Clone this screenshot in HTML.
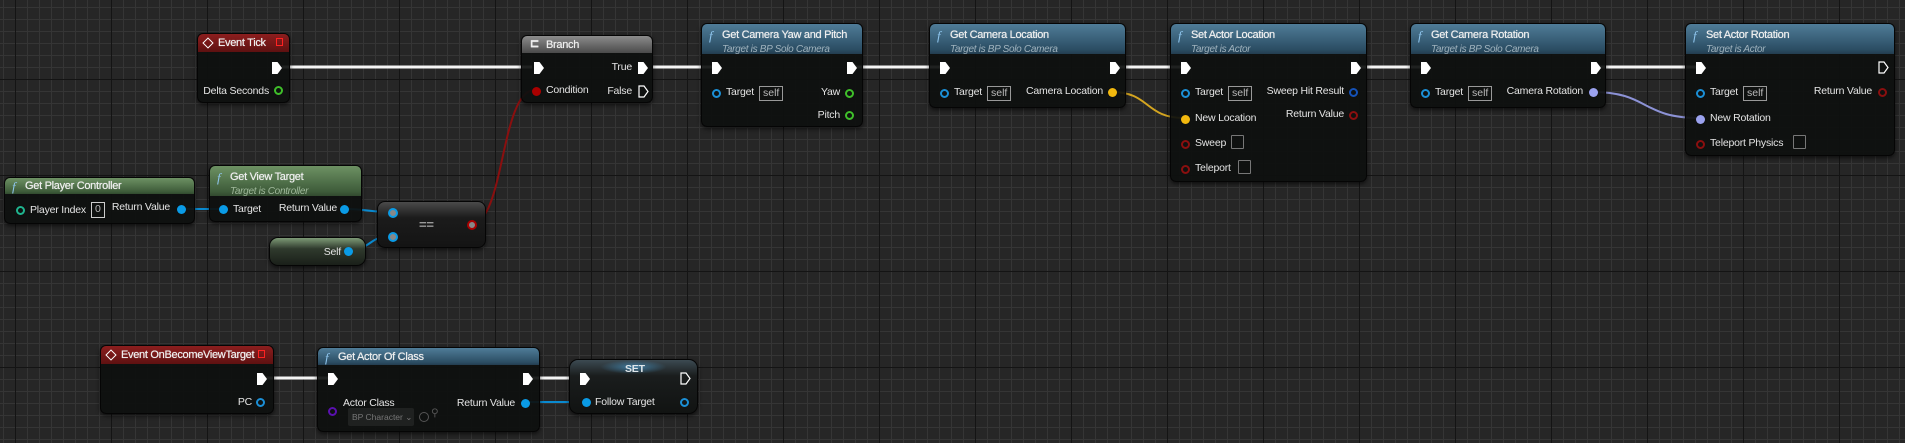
<!DOCTYPE html>
<html><head><meta charset="utf-8"><style>
*{margin:0;padding:0;box-sizing:border-box}
body{width:1905px;height:443px;overflow:hidden;position:relative;font-family:"Liberation Sans",sans-serif;font-size:10.5px;color:#e6e6e6;
background-color:#262626;
background-image:
linear-gradient(to right,#141414 1px,transparent 1px),
linear-gradient(to bottom,#141414 1px,transparent 1px),
linear-gradient(to right,#353535 1px,transparent 1px),
linear-gradient(to bottom,#353535 1px,transparent 1px);
background-size:96px 96px,96px 96px,12px 12px,12px 12px;
background-position:15px 79px,15px 79px,3px 7px,3px 7px;}
.n{position:absolute;background:rgba(14,16,15,0.93);border:1px solid #050505;border-radius:6px;box-shadow:0 2px 4px rgba(0,0,0,.6)}
.h{position:absolute;left:0;right:0;top:0;border-radius:5px 5px 0 0;padding:5px 0 0 20px;font-size:11px;letter-spacing:-0.3px;color:#eee;white-space:nowrap;text-shadow:0 0 0.6px #fff}
.h i{position:absolute;left:7px;top:4px;font-family:"Liberation Serif",serif;font-style:italic;font-weight:normal;color:#8fc6ee;font-size:13px;text-shadow:none}
.h s{display:block;text-decoration:none;font-style:italic;font-weight:normal;font-size:10px;color:#9fb2bd;margin-top:3px;text-shadow:none}
.blue{background:linear-gradient(#4f7c98,#2b4d63 85%,#233d4f)}
.green{background:linear-gradient(#6d9163,#3e5c3a 85%,#324a2f)}
.green s{color:#9fb89a}
.red{background:linear-gradient(#8c1e1e,#5e1111)}
.grey{background:linear-gradient(#8c8c8c,#4a4a4a)}
.t{position:absolute;white-space:nowrap;font-size:10.5px;letter-spacing:-0.2px;color:#e4e4e4}
.ex{position:absolute;width:10px;height:12px;background:#fff;clip-path:polygon(0 0,55% 0,100% 50%,55% 100%,0 100%)}
.exo{position:absolute;width:11px;height:13px}
.p{position:absolute;width:9px;height:9px;border-radius:50%}
.po{position:absolute;width:9px;height:9px;border-radius:50%;border:2px solid}
.box{position:absolute;border:1px solid #999;color:#bbb;font-size:10.5px;padding:0 3px;height:15px;line-height:13px}
.cb{position:absolute;width:13px;height:14px;border:1px solid #777;border-radius:1px}
</style></head><body>
<svg width="1905" height="443" style="position:absolute;left:0;top:0">
<g stroke="#f4f4f4" stroke-width="3" fill="none">
<line x1="282" y1="67" x2="532" y2="67"/>
<line x1="652" y1="67" x2="712" y2="67"/>
<line x1="850" y1="67" x2="940" y2="67"/>
<line x1="1114" y1="67" x2="1182" y2="67"/>
<line x1="1354" y1="67" x2="1422" y2="67"/>
<line x1="1594" y1="67" x2="1698" y2="67"/>
<line x1="262" y1="378" x2="330" y2="378"/>
<line x1="526" y1="378" x2="582" y2="378"/>
</g>
<g fill="none" stroke-width="2">
<path d="M471 224 C505 224,500 90,535 90" stroke="#8a0f0f"/>
<path d="M178 209 L222 209" stroke="#0a8ad0"/>
<path d="M343 209 C370 209,365 212,392 212" stroke="#0a8ad0"/>
<path d="M348 250 C372 250,368 236,392 236" stroke="#0a8ad0"/>
<path d="M1112 92 C1150 92,1145 118,1184 118" stroke="#d4a520"/>
<path d="M1592 92 C1650 92,1640 118,1700 118" stroke="#8c92d6"/>
<path d="M524 402 L586 402" stroke="#0a8ad0"/>
</g>
</svg>

<!-- Event Tick -->
<div class="n" style="left:197px;top:33px;width:93px;height:70px">
<div class="h red" style="height:18px;padding:3px 0 0 20px">Event Tick<span style="position:absolute;left:6px;top:5px;width:8px;height:8px;border:1.5px solid #fff;transform:rotate(45deg)"></span><span style="position:absolute;right:6px;top:4px;width:7px;height:8px;border:1.5px solid #f22"></span></div>
<div class="ex" style="left:74px;top:28px"></div>
<div class="t" style="right:20px;top:51px">Delta Seconds</div>
<div class="po" style="left:76px;top:52px;border-color:#3fbf2a"></div>
</div>

<!-- Branch -->
<div class="n" style="left:521px;top:35px;width:132px;height:68px">
<div class="h grey" style="height:17px;padding:3px 0 0 24px">Branch<span style="position:absolute;left:8px;top:1px;font-weight:bold">⊏</span></div>
<div class="ex" style="left:12px;top:26px"></div>
<div class="t" style="right:20px;top:25px">True</div>
<div class="ex" style="left:116px;top:26px"></div>
<div class="p" style="left:10px;top:51px;background:#a00"></div>
<div class="t" style="left:24px;top:48px">Condition</div>
<div class="t" style="right:20px;top:49px">False</div>
<svg class="exo" style="left:116px;top:49px"><polygon points="1,1 6,1 10,6.5 6,12 1,12" fill="none" stroke="#fff" stroke-width="1.2"/></svg>
</div>

<!-- Get Camera Yaw and Pitch -->
<div class="n" style="left:701px;top:23px;width:162px;height:104px">
<div class="h blue" style="height:30px"><i>f</i>Get Camera Yaw and Pitch<s>Target is BP Solo Camera</s></div>
<div class="ex" style="left:10px;top:38px"></div>
<div class="ex" style="left:145px;top:38px"></div>
<div class="po" style="left:10px;top:65px;border-color:#1b8fd6"></div>
<div class="t" style="left:24px;top:62px">Target</div>
<div class="box" style="left:57px;top:62px">self</div>
<div class="t" style="right:22px;top:62px">Yaw</div>
<div class="po" style="left:143px;top:65px;border-color:#3fbf2a"></div>
<div class="t" style="right:22px;top:85px">Pitch</div>
<div class="po" style="left:143px;top:87px;border-color:#3fbf2a"></div>
</div>

<!-- Get Camera Location -->
<div class="n" style="left:929px;top:23px;width:197px;height:85px">
<div class="h blue" style="height:30px"><i>f</i>Get Camera Location<s>Target is BP Solo Camera</s></div>
<div class="ex" style="left:10px;top:38px"></div>
<div class="ex" style="left:180px;top:38px"></div>
<div class="po" style="left:10px;top:65px;border-color:#1b8fd6"></div>
<div class="t" style="left:24px;top:62px">Target</div>
<div class="box" style="left:57px;top:62px">self</div>
<div class="t" style="right:22px;top:61px">Camera Location</div>
<div class="p" style="left:178px;top:64px;background:#f2b80e"></div>
</div>

<!-- Set Actor Location -->
<div class="n" style="left:1170px;top:23px;width:197px;height:159px">
<div class="h blue" style="height:30px"><i>f</i>Set Actor Location<s>Target is Actor</s></div>
<div class="ex" style="left:10px;top:38px"></div>
<div class="ex" style="left:180px;top:38px"></div>
<div class="po" style="left:10px;top:65px;border-color:#1b8fd6"></div>
<div class="t" style="left:24px;top:62px">Target</div>
<div class="box" style="left:57px;top:62px">self</div>
<div class="t" style="right:22px;top:61px">Sweep Hit Result</div>
<div class="po" style="left:178px;top:64px;border-color:#1552b8"></div>
<div class="p" style="left:10px;top:91px;background:#f2b80e"></div>
<div class="t" style="left:24px;top:88px">New Location</div>
<div class="t" style="right:22px;top:84px">Return Value</div>
<div class="po" style="left:178px;top:87px;border-color:#8a0f0f"></div>
<div class="po" style="left:10px;top:116px;border-color:#8a0f0f"></div>
<div class="t" style="left:24px;top:113px">Sweep</div>
<div class="cb" style="left:60px;top:111px"></div>
<div class="po" style="left:10px;top:141px;border-color:#8a0f0f"></div>
<div class="t" style="left:24px;top:138px">Teleport</div>
<div class="cb" style="left:67px;top:136px"></div>
</div>

<!-- Get Camera Rotation -->
<div class="n" style="left:1410px;top:23px;width:196px;height:85px">
<div class="h blue" style="height:30px"><i>f</i>Get Camera Rotation<s>Target is BP Solo Camera</s></div>
<div class="ex" style="left:10px;top:38px"></div>
<div class="ex" style="left:180px;top:38px"></div>
<div class="po" style="left:10px;top:65px;border-color:#1b8fd6"></div>
<div class="t" style="left:24px;top:62px">Target</div>
<div class="box" style="left:57px;top:62px">self</div>
<div class="t" style="right:22px;top:61px">Camera Rotation</div>
<div class="p" style="left:178px;top:64px;background:#9ba2ef"></div>
</div>

<!-- Set Actor Rotation -->
<div class="n" style="left:1685px;top:23px;width:210px;height:133px">
<div class="h blue" style="height:30px"><i>f</i>Set Actor Rotation<s>Target is Actor</s></div>
<div class="ex" style="left:10px;top:38px"></div>
<svg class="exo" style="left:192px;top:37px"><polygon points="1,1 6,1 10,6.5 6,12 1,12" fill="none" stroke="#fff" stroke-width="1.2"/></svg>
<div class="po" style="left:10px;top:65px;border-color:#1b8fd6"></div>
<div class="t" style="left:24px;top:62px">Target</div>
<div class="box" style="left:57px;top:62px">self</div>
<div class="t" style="right:22px;top:61px">Return Value</div>
<div class="po" style="left:192px;top:64px;border-color:#8a0f0f"></div>
<div class="p" style="left:10px;top:91px;background:#9ba2ef"></div>
<div class="t" style="left:24px;top:88px">New Rotation</div>
<div class="po" style="left:10px;top:116px;border-color:#8a0f0f"></div>
<div class="t" style="left:24px;top:113px">Teleport Physics</div>
<div class="cb" style="left:107px;top:111px"></div>
</div>

<!-- Get Player Controller -->
<div class="n" style="left:4px;top:177px;width:191px;height:47px">
<div class="h green" style="height:16px;padding-top:2px"><i style="top:1px">f</i>Get Player Controller</div>
<div class="po" style="left:11px;top:28px;border-color:#1fb58f"></div>
<div class="t" style="left:25px;top:26px">Player Index</div>
<div class="box" style="left:86px;top:24px;height:16px;padding:0 3px;border-color:#ccc">0</div>
<div class="t" style="right:24px;top:23px">Return Value</div>
<div class="p" style="left:172px;top:27px;background:#0a9be6"></div>
</div>

<!-- Get View Target -->
<div class="n" style="left:209px;top:165px;width:153px;height:57px">
<div class="h green" style="height:30px"><i>f</i>Get View Target<s>Target is Controller</s></div>
<div class="p" style="left:9px;top:39px;background:#0a9be6"></div>
<div class="t" style="left:23px;top:37px">Target</div>
<div class="t" style="right:24px;top:36px">Return Value</div>
<div class="p" style="left:130px;top:39px;background:#0a9be6"></div>
</div>

<!-- Self -->
<div class="n" style="left:269px;top:237px;width:97px;height:29px;border-radius:9px;background:linear-gradient(#7d9a76 0,#2f3a2d 40%,#1a1f19)">
<div class="t" style="right:24px;top:8px">Self</div>
<div class="p" style="left:74px;top:9px;background:#0a9be6"></div>
</div>

<!-- == -->
<div class="n" style="left:377px;top:201px;width:109px;height:47px;border-radius:8px;background:linear-gradient(#4a4a4a,#1b1b1b 35%,#141414)">
<div style="position:absolute;left:10px;top:6px;width:10px;height:10px;border-radius:50%;background:#888;border:2px solid #0a9be6"></div>
<div style="position:absolute;left:10px;top:30px;width:10px;height:10px;border-radius:50%;background:#888;border:2px solid #0a9be6"></div>
<div class="t" style="left:41px;top:15px;font-weight:bold;color:#999;font-size:13px">==</div>
<div style="position:absolute;left:89px;top:18px;width:10px;height:10px;border-radius:50%;background:#888;border:2px solid #a00"></div>
</div>

<!-- Event OnBecomeViewTarget -->
<div class="n" style="left:100px;top:345px;width:174px;height:69px">
<div class="h red" style="height:18px;padding:3px 0 0 20px">Event OnBecomeViewTarget<span style="position:absolute;left:6px;top:5px;width:8px;height:8px;border:1.5px solid #fff;transform:rotate(45deg)"></span><span style="position:absolute;right:8px;top:4px;width:7px;height:8px;border:1.5px solid #f22"></span></div>
<div class="ex" style="left:156px;top:27px"></div>
<div class="t" style="right:21px;top:50px">PC</div>
<div class="po" style="left:155px;top:52px;border-color:#1b8fd6"></div>
</div>

<!-- Get Actor Of Class -->
<div class="n" style="left:317px;top:347px;width:223px;height:85px">
<div class="h blue" style="height:17px;padding-top:3px"><i style="top:2px">f</i>Get Actor Of Class</div>
<div class="ex" style="left:10px;top:25px"></div>
<div class="ex" style="left:205px;top:25px"></div>
<div class="po" style="left:10px;top:59px;border-color:#5a10b0"></div>
<div class="t" style="left:25px;top:49px">Actor Class</div>
<div style="position:absolute;left:30px;top:60px;width:66px;height:18px;background:#1f2120;border-radius:2px;color:#777;font-size:8.5px;line-height:18px;padding-left:4px">BP Character ⌄</div>
<div style="position:absolute;left:101px;top:64px;width:10px;height:10px;border-radius:50%;border:1px solid #555"></div>
<div class="t" style="left:113px;top:59px;color:#555">⚲</div>
<div class="t" style="right:24px;top:49px">Return Value</div>
<div class="p" style="left:203px;top:51px;background:#0a9be6"></div>
</div>

<!-- SET -->
<div class="n" style="left:569px;top:359px;width:129px;height:55px;border-radius:9px;background:linear-gradient(#3c4a52 0,#1a1d1d 30%,#111312)">
<div style="position:absolute;left:30px;right:30px;top:0;height:14px;background:radial-gradient(ellipse at center,rgba(70,150,200,.7),transparent 70%)"></div>
<div class="t" style="left:55px;top:3px;font-weight:bold;color:#dfe6ea">SET</div>
<div class="ex" style="left:10px;top:13px"></div>
<svg class="exo" style="left:110px;top:12px"><polygon points="1,1 6,1 10,6.5 6,12 1,12" fill="none" stroke="#fff" stroke-width="1.2"/></svg>
<div class="p" style="left:12px;top:38px;background:#0a9be6"></div>
<div class="t" style="left:25px;top:36px">Follow Target</div>
<div class="po" style="left:110px;top:38px;border-color:#1b8fd6"></div>
</div>
</body></html>
